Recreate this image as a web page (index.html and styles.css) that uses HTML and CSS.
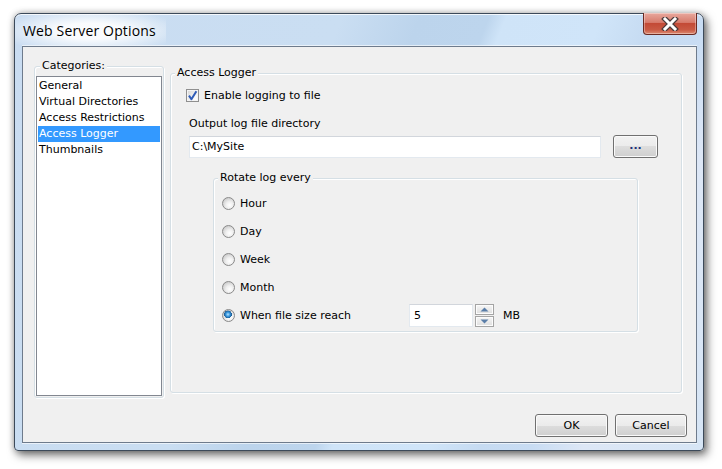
FILE: index.html
```html
<!DOCTYPE html>
<html>
<head>
<meta charset="utf-8">
<link rel="stylesheet" href="styles.css">
</head>
<body>
<div class="window">
  <div class="titlebar">
    <span class="title">Web Server Options</span>
    <div class="close">
      <svg width="20" height="14" viewBox="0 0 20 14">
        <path d="M5 2 L15 12 M15 2 L5 12" stroke="#4a3a3a" stroke-width="5.4" stroke-linecap="square"/>
        <path d="M5 2 L15 12 M15 2 L5 12" stroke="#ffffff" stroke-width="3" stroke-linecap="square"/>
      </svg>
    </div>
  </div>
  <div class="client">
    <div class="main">
      <div class="group categories">
        <div class="group-title">Categories:</div>
        <ul class="list">
          <li>General</li>
          <li>Virtual Directories</li>
          <li>Access Restrictions</li>
          <li class="selected">Access Logger</li>
          <li>Thumbnails</li>
        </ul>
      </div>
      <div class="group logger">
        <div class="group-title">Access Logger</div>
        <div class="check-row">
          <span class="checkbox">
            <svg width="13" height="13" viewBox="0 0 13 13">
              <path d="M3 6.6 L5.4 10.2 L10.4 2.2" fill="none" stroke="#2f5bb7" stroke-width="2" stroke-linejoin="round"/>
            </svg>
          </span>
          <span>Enable logging to file</span>
        </div>
        <div class="field-label">Output log file directory</div>
        <div class="dir-row">
          <div class="textbox dir">C:\MySite</div>
          <div class="btn browse"><span class="dots">...</span></div>
        </div>
        <div class="group rotate">
          <div class="group-title">Rotate log every</div>
          <div class="radio-row"><span class="radio"></span><span>Hour</span></div>
          <div class="radio-row"><span class="radio"></span><span>Day</span></div>
          <div class="radio-row"><span class="radio"></span><span>Week</span></div>
          <div class="radio-row"><span class="radio"></span><span>Month</span></div>
          <div class="radio-row">
            <span class="radio checked"></span><span class="radio-text">When file size reach</span>
            <div class="textbox size">5</div>
            <div class="spin">
              <div class="spin-btn"><svg width="9" height="5" viewBox="0 0 9 5"><path d="M0.5 4.5 L4.5 0.5 L8.5 4.5 Z" fill="#5b7ea8"/></svg></div>
              <div class="spin-btn"><svg width="9" height="5" viewBox="0 0 9 5"><path d="M0.5 0.5 L4.5 4.5 L8.5 0.5 Z" fill="#5b7ea8"/></svg></div>
            </div>
            <span class="unit">MB</span>
          </div>
        </div>
      </div>
    </div>
    <div class="buttons">
      <div class="btn ok">OK</div>
      <div class="btn cancel">Cancel</div>
    </div>
  </div>
</div>
</body>
</html>
```

FILE: styles.css
```css
* { box-sizing: border-box; }
html, body { margin: 0; padding: 0; background: #ffffff; }
body {
  width: 722px;
  height: 469px;
  overflow: hidden;
  font-family: "DejaVu Sans", Tahoma, sans-serif;
  font-size: 11px;
  color: #000;
}
.window {
  margin: 13px 0 0 14px;
  width: 690px;
  height: 438px;
  border: 1px solid #3c4a5a;
  border-radius: 7px 7px 4px 4px;
  background:
    linear-gradient(112deg,
      #c9dcf1 0%, #cadef2 38%, #bcd4ec 47%, #bdd5ed 55%, #cfe4f8 57%,
      #d0e5f9 68%, #c6dbf2 74%, #c8dcf3 80%, #dde7f6 86%, #d6e5f5 100%);
  box-shadow: inset 0 1px 0 rgba(255,255,255,0.8), 3px 4px 10px rgba(0,0,0,0.55), 0 0 6px rgba(0,0,0,0.25);
  display: flex;
  flex-direction: column;
}
.titlebar {
  height: 32px;
  display: flex;
  align-items: flex-start;
  justify-content: space-between;
  border-radius: 6px 6px 0 0;
}
.title {
  padding: 8px 10px 0 8px;
  height: 31px;
  font-family: "Open Sans", "Noto Sans", sans-serif;
  font-size: 14px;
  letter-spacing: 0.15px;
  line-height: 18px;
  color: #000;
  background: radial-gradient(ellipse 62% 72% at 50% 55%, rgba(255,255,255,0.9) 35%, rgba(255,255,255,0) 100%);
  border-radius: 6px 0 0 0;
}
.close {
  margin: -1px 6px 0 0;
  width: 54px;
  height: 22px;
  border: 1px solid #6b2a22;
  border-top: none;
  border-radius: 0 0 4px 4px;
  background: linear-gradient(#e8a89d 0%, #d77b6c 45%, #c34a36 50%, #c95a44 80%, #dd8a70 100%);
  box-shadow: inset 0 0 0 1px rgba(255,255,255,0.35);
  display: flex;
  align-items: center;
  justify-content: center;
}
.client {
  margin: 0 6px 0 7px;
  height: 397px;
  border: 1px solid #6e7b8c;
  background: #f0f0f0;
  display: flex;
  flex-direction: column;
  box-shadow: 0 -1px 0 rgba(255,255,255,0.6), 0 1px 0 rgba(255,255,255,0.6);
}
.main {
  display: flex;
  align-items: flex-start;
}
.group {
  border: 1px solid #d5dfe5;
  border-radius: 3px;
  box-shadow: inset 1px 1px 0 #ffffff, 1px 1px 0 #ffffff;
}
.group-title {
  display: table;
  margin: -8px 0 0 4px;
  padding: 0 2px;
  line-height: 14px;
  background: #f0f0f0;
  white-space: nowrap;
}
.categories {
  margin: 19px 0 0 11px;
  width: 130px;
  height: 332px;
  padding: 0 1px 1px 1px;
}
.list {
  margin: 3px 0 0 0;
  padding: 1px;
  list-style: none;
  height: 320px;
  background: #fff;
  border: 1px solid #828790;
}
.list li {
  height: 16px;
  line-height: 16px;
  padding-left: 1px;
  white-space: nowrap;
}
.list li.selected {
  background: #3399ff;
  color: #fff;
}
.logger {
  margin: 26px 0 0 6px;
  width: 512px;
  height: 320px;
}
.check-row {
  display: flex;
  align-items: center;
  margin: 9px 0 0 15px;
  height: 13px;
  line-height: 14px;
}
.checkbox {
  width: 13px;
  height: 13px;
  border: 1px solid #8f8f8f;
  background: linear-gradient(135deg, #d4d4d4, #f8f8f8 70%, #ffffff);
  box-shadow: inset 0 0 0 1px #f4f4f4;
  margin-right: 5px;
  display: flex;
}
.checkbox svg { margin: -1px; }
.field-label {
  margin: 15px 0 0 18px;
  line-height: 14px;
}
.dir-row {
  display: flex;
  align-items: flex-start;
  margin: 4px 0 0 18px;
}
.textbox {
  background: #fff;
  border: 1px solid #e3e9ef;
  border-top-color: #d2d6dc;
}
.dir {
  width: 412px;
  height: 22px;
  line-height: 20px;
  padding-left: 2px;
  margin-top: 1px;
}
.btn {
  border: 1px solid #707070;
  border-radius: 3px;
  background: linear-gradient(#f2f2f2 0%, #ebebeb 50%, #dddddd 50%, #cfcfcf 100%);
  box-shadow: inset 0 0 0 1px #fafafa;
  display: flex;
  align-items: center;
  justify-content: center;
  height: 23px;
}
.browse {
  width: 45px;
  margin-left: 12px;
}
.dots {
  color: #1c2f78;
  font-weight: bold;
  margin-top: -2px;
}
.rotate {
  margin: 20px 0 0 42px;
  width: 425px;
  height: 154px;
}
.radio-row {
  height: 28px;
  display: flex;
  align-items: center;
  padding-left: 8px;
}
.rotate .group-title + .radio-row { margin-top: 4px; }
.radio {
  width: 13px;
  height: 13px;
  border-radius: 50%;
  border: 1px solid #8a8a8a;
  background: radial-gradient(circle at 60% 65%, #ffffff 0%, #f0f0f0 35%, #cfcfcf 75%, #b8b8b8 100%);
  margin-right: 5px;
  flex: none;
}
.radio.checked {
  background:
    radial-gradient(circle at 45% 40%, #b8e4ff 0%, #3d9be0 22%, #1a5c96 42%, rgba(26,92,150,0) 45%),
    radial-gradient(circle at 60% 65%, #ffffff 0%, #f0f0f0 35%, #cfcfcf 75%, #b8b8b8 100%);
}
.radio-text { width: 169px; }
.size {
  width: 64px;
  height: 23px;
  line-height: 21px;
  padding-left: 4px;
}
.spin {
  margin-left: 2px;
  display: flex;
  flex-direction: column;
  gap: 1px;
}
.spin-btn {
  width: 19px;
  height: 11px;
  border: 1px solid #a4a4a4;
  background: linear-gradient(#f6f6f6, #dedede);
  box-shadow: inset 0 0 0 1px #fcfcfc;
  display: flex;
  align-items: center;
  justify-content: center;
}
.unit { margin-left: 9px; }
.buttons {
  margin-top: auto;
  margin-bottom: 5px;
  display: flex;
  justify-content: flex-end;
  gap: 7px;
  padding-right: 9px;
}
.ok { width: 73px; }
.cancel { width: 72px; }
```
